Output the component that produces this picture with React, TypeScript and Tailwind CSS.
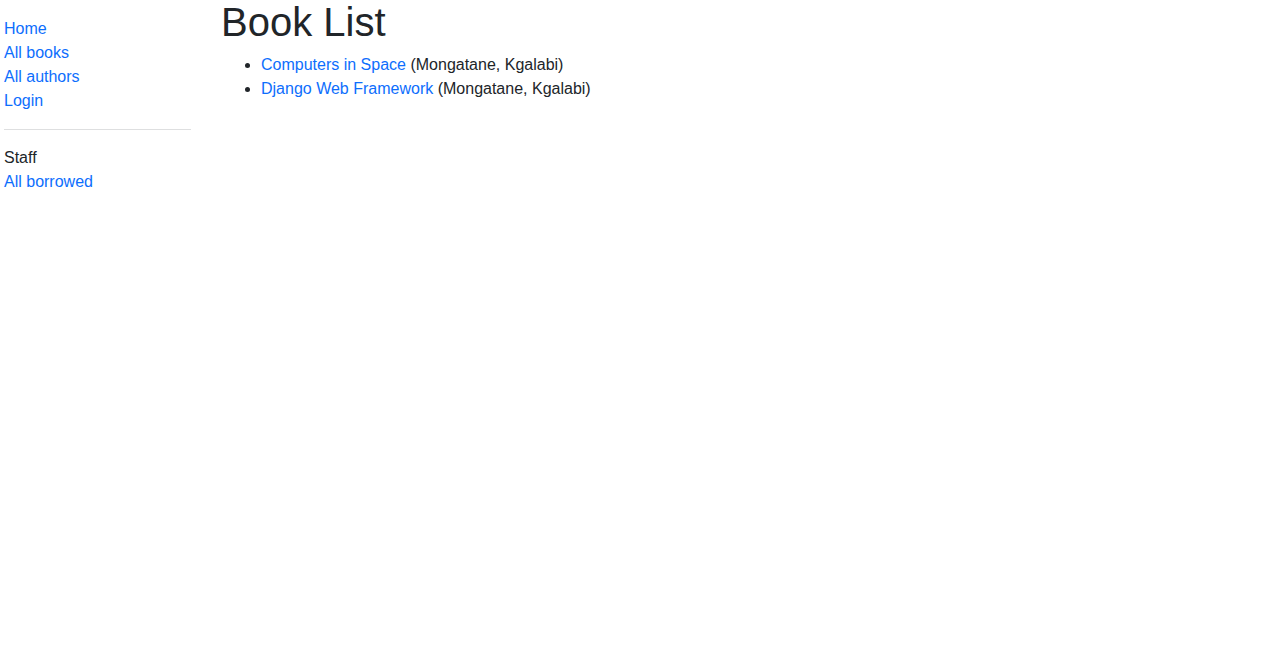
const navLinks = ['Home', 'All books', 'All authors', 'Login']

const books = [
  { title: 'Computers in Space', author: 'Mongatane, Kgalabi' },
  { title: 'Django Web Framework', author: 'Mongatane, Kgalabi' },
]

export default function App() {
  return (
    <div
      className="min-h-screen bg-white text-[#212529] text-base leading-6 flex"
      style={{ fontFamily: '"Liberation Sans", Arial, sans-serif' }}
    >
      {/* Sidebar */}
      <div className="w-[217px] shrink-0 pl-1 pr-[26px] pt-[17px]">
        <ul>
          {navLinks.map((l) => (
            <li key={l}>
              <a href="#" className="text-[#0d6efd]">{l}</a>
            </li>
          ))}
        </ul>
        <hr className="mt-[16px] mb-[16px] border-0 border-t border-[#dedfe0]" />
        <ul>
          <li>Staff</li>
          <li>
            <a href="#" className="text-[#0d6efd]">All borrowed</a>
          </li>
        </ul>
      </div>

      {/* Content */}
      <div className="flex-1 pl-1">
        <h1 className="text-[40px] leading-[44px] font-normal mb-[9px]">Book List</h1>
        <ul className="list-disc pl-10">
          {books.map((b) => (
            <li key={b.title}>
              <a href="#" className="text-[#0d6efd]">{b.title}</a> ({b.author})
            </li>
          ))}
        </ul>
      </div>
    </div>
  )
}
